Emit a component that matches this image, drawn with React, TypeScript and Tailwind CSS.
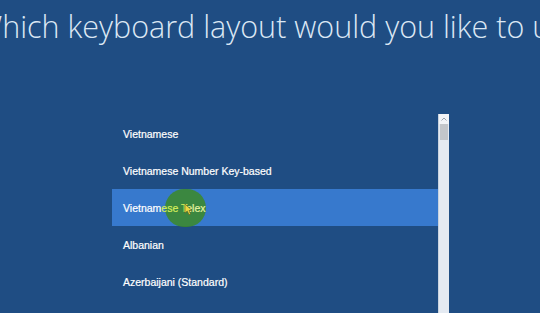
import React from 'react';

const LAYOUTS = [
  'Vietnamese',
  'Vietnamese Number Key-based',
  'Vietnamese Telex',
  'Albanian',
  'Azerbaijani (Standard)',
  'Azerbaijani Latin',
];

const SELECTED = 'Vietnamese Telex';

export default function App() {
  return (
    <div className="w-[540px] h-[313px] overflow-hidden bg-[#1f4d83] relative" style={{ fontFamily: '"Liberation Sans", Arial, sans-serif' }}>
      {/* Title */}
      <div className="h-[52px] pt-[4px] whitespace-nowrap overflow-hidden">
        <h1
          className="ml-[-25px] text-[30.5px] leading-[44px] font-light text-[#dbe7f4]"
          style={{ fontFamily: '"Open Sans", "Noto Sans", sans-serif' }}
        >
          Which keyboard layout would you like to use?
        </h1>
      </div>

      {/* List + scrollbar */}
      <div className="flex ml-[112px] mt-[62px] w-[337px]">
        <ul className="flex-1 pt-[1px]">
          {LAYOUTS.map(name => {
            const active = name === SELECTED;
            return (
              <li
                key={name}
                className={`relative h-[37px] flex items-center pl-[11px] pt-[2px] text-[10.5px] text-white [-webkit-text-stroke:0.2px_#ffffff] ${active ? 'bg-[#3779cd]' : ''}`}
              >
                {active && (
                  <span className="absolute left-[53px] top-[0px] w-[41px] h-[38px] rounded-full bg-[#3c8a27]/85" />
                )}
                {active ? (
                  <span className="relative">
                    Vietnam
                    <span className="text-[#d6ee5c] [-webkit-text-stroke:0.2px_#d6ee5c]">ese T</span>
                    <span className="text-[#e4f4a0] [-webkit-text-stroke:0.2px_#e4f4a0]">elex</span>
                  </span>
                ) : (
                  name
                )}
                {active && (
                  <svg className="absolute left-[72px] top-[14px]" width="9" height="13" viewBox="0 0 9 13">
                    <path d="M1 1 L1 10 L3.3 8 L5 11.8 L6.6 11 L5 7.5 L8 7.5 Z" fill="#e8d840" stroke="#5a5a20" strokeWidth="0.6" />
                  </svg>
                )}
              </li>
            );
          })}
        </ul>
        <div className="w-[11px] h-[222px] bg-[#e4eaf2] border-l border-[#c9d3de] flex flex-col">
          <div className="h-[10px] flex items-center justify-center bg-[#f2f4f7]">
            <svg width="6" height="4" viewBox="0 0 6 4">
              <path d="M0.5 3.5 L3 1 L5.5 3.5" fill="none" stroke="#9aa3ad" strokeWidth="1" />
            </svg>
          </div>
          <div className="h-[16px] mx-[1px] bg-[#c3c6ca]" />
        </div>
      </div>
    </div>
  );
}
